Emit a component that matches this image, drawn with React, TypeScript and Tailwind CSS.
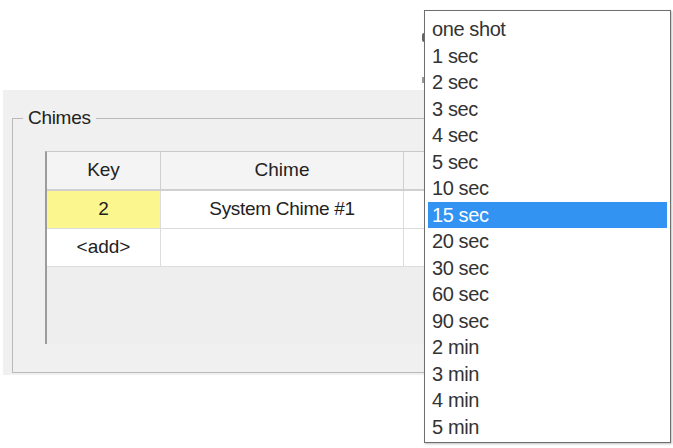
import React from 'react';

// Interval choices shown in the open drop-down list
const intervals = [
  'one shot',
  '1 sec',
  '2 sec',
  '3 sec',
  '4 sec',
  '5 sec',
  '10 sec',
  '15 sec',
  '20 sec',
  '30 sec',
  '60 sec',
  '90 sec',
  '2 min',
  '3 min',
  '4 min',
  '5 min',
];

const selected = '15 sec';

function ChimeGrid() {
  return (
    <div className="ml-[32px] mt-[31px] h-[193px] w-[420px] border-l-2 border-t border-l-[#9c9c9c] border-t-[#c8c8c8] bg-[#eeeeee]">
      {/* header row */}
      <div className="flex h-[39px] border-b-2 border-[#d0d0d0] bg-[#f4f4f4] text-[19px] text-[#222]">
        <div className="flex w-[114px] items-center justify-center border-r border-[#cfcfcf]">Key</div>
        <div className="flex w-[243px] items-center justify-center border-r border-[#cfcfcf]">Chime</div>
        <div className="flex-1" />
      </div>
      {/* data row */}
      <div className="flex h-[38px] border-b border-[#dcdcdc] bg-white text-[19px] text-[#222]">
        <div className="flex w-[114px] items-center justify-center border-r border-[#dcdcdc] bg-[#fbf78e]">2</div>
        <div className="flex w-[243px] items-center justify-center border-r border-[#dcdcdc] tracking-[-0.3px]">
          System Chime #1
        </div>
        <div className="flex-1" />
      </div>
      {/* new row placeholder */}
      <div className="flex h-[38px] border-b border-[#dcdcdc] bg-white text-[19px] text-[#222]">
        <div className="flex w-[114px] items-center justify-center border-r border-[#dcdcdc]">&lt;add&gt;</div>
        <div className="w-[243px] border-r border-[#dcdcdc]" />
        <div className="flex-1" />
      </div>
    </div>
  );
}

function DropList() {
  return (
    <div className="absolute left-[424px] top-[10px] h-[433px] w-[247px] border border-[#6e6e6e] bg-white px-[3px] pt-[5px] shadow-[1px_1px_2px_rgba(0,0,0,0.25)]">
      {intervals.map((item) => (
        <div
          key={item}
          className={`flex h-[26.5px] items-center px-[4px] text-[20px] tracking-[-0.4px] ${
            item === selected ? 'bg-[#3393f3] text-white' : 'text-[#333]'
          }`}
        >
          {item}
        </div>
      ))}
    </div>
  );
}

export default function App() {
  return (
    <div
      className="relative h-[448px] w-[673px] overflow-hidden bg-white"
      style={{ fontFamily: '"Liberation Sans", Arial, sans-serif' }}
    >
      <div className="ml-[3px] mt-[90px] h-[285px] w-[440px] bg-[#f0f0f0] pt-[28px]">
        {/* Chimes group box */}
        <div className="relative ml-[9px] h-[255px] w-[450px] border border-[#b9b9b9] pt-[1px]">
          <span className="absolute left-[10px] top-[-13px] bg-[#f0f0f0] px-[5px] text-[19px] leading-[24px] tracking-[-0.3px] text-[#222]">
            Chimes
          </span>
          <ChimeGrid />
        </div>
      </div>

      {/* edges of controls hidden behind the open list */}
      <span className="absolute left-[422px] top-[33px] h-[9px] w-[2px] rounded-l-full bg-[#666]" />
      <span className="absolute left-[422px] top-[77px] h-[6px] w-[2px] bg-[#9a9a9a]" />

      <DropList />
    </div>
  );
}
